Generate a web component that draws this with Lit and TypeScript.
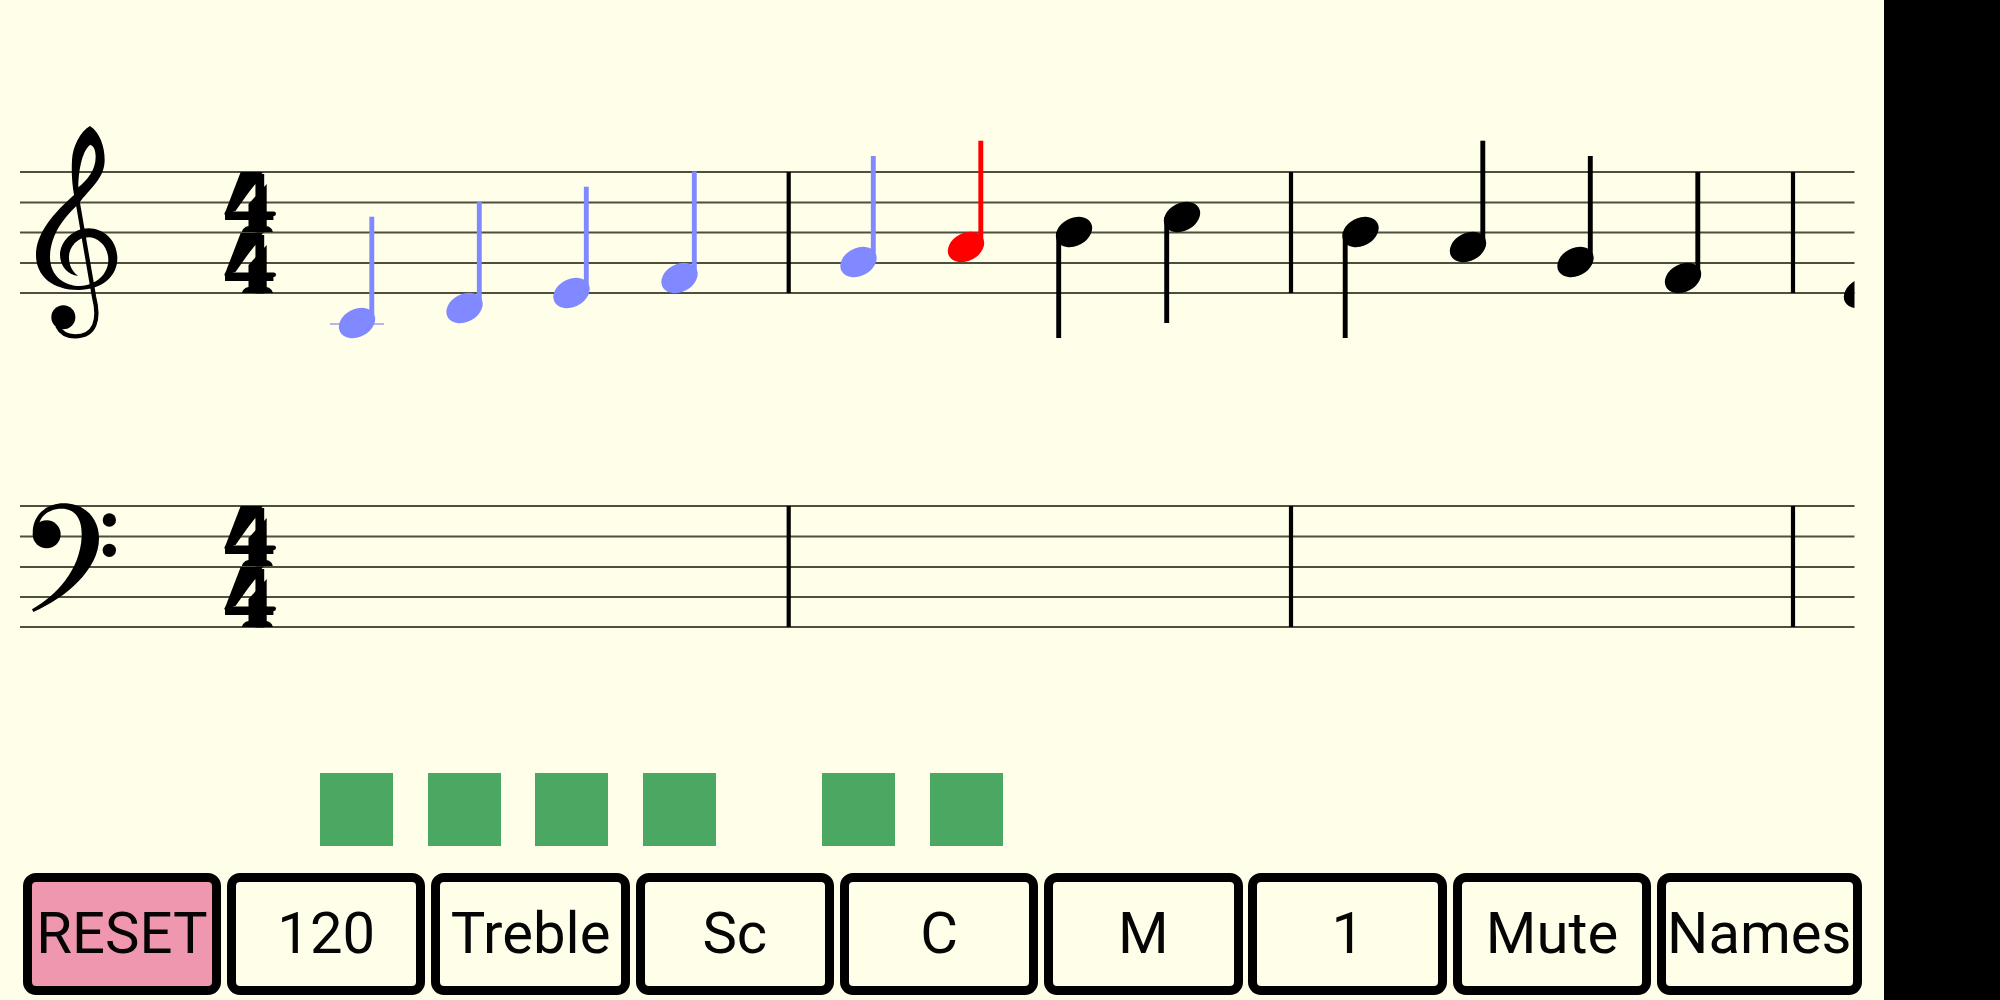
import { LitElement, html, css, svg } from "lit";
import { customElement } from "lit/decorators.js";

const STAFF_A = [172, 202.5, 232.5, 263, 293];
const STAFF_B = [506, 536.5, 567, 597, 627];
const BARS = [788.7, 1291, 1793];
const BLUE = "#8089ff";
const RED = "#ff0000";
const BLACK = "#000000";

type Note = { cx: number; cy: number; tip: number; color: string; down?: boolean };

const NOTES: Note[] = [
  { cx: 357, cy: 323, tip: 216.7, color: BLUE },
  { cx: 464.5, cy: 308, tip: 201.7, color: BLUE },
  { cx: 571.5, cy: 293, tip: 186.7, color: BLUE },
  { cx: 679.5, cy: 278, tip: 171.5, color: BLUE },
  { cx: 858.5, cy: 262, tip: 156, color: BLUE },
  { cx: 966, cy: 247, tip: 140.7, color: RED },
  { cx: 1074, cy: 232, tip: 338, color: BLACK, down: true },
  { cx: 1182, cy: 217, tip: 323, color: BLACK, down: true },
  { cx: 1360.5, cy: 232, tip: 338, color: BLACK, down: true },
  { cx: 1468, cy: 247, tip: 140.7, color: BLACK },
  { cx: 1575.5, cy: 262, tip: 156, color: BLACK },
  { cx: 1683, cy: 278, tip: 172, color: BLACK },
  { cx: 1862, cy: 293, tip: 187, color: BLACK },
];

const BUTTONS = ["RESET", "120", "Treble", "Sc", "C", "M", "1", "Mute", "Names"];

@customElement("app-root")
export class AppRoot extends LitElement {
  static styles = css`
    :host {
      display: flex;
      width: 2000px;
      height: 1000px;
      background: #000;
      font-family: Roboto, "Liberation Sans", sans-serif;
      overflow: hidden;
    }
    .main {
      flex: 0 0 1884px;
      height: 1000px;
      background: #fffee8;
      display: flex;
      flex-direction: column;
    }
    .score {
      display: block;
      flex: 0 0 773px;
      width: 1884px;
      height: 773px;
    }
    .staff-line {
      stroke: #4f4f3f;
      stroke-width: 2;
    }
    .bar-line {
      stroke: #000;
      stroke-width: 4.2;
    }
    .ledger {
      stroke: #9ba1f2;
      stroke-width: 1.5;
    }
    .digit {
      font-family: "Liberation Serif", serif;
      font-size: 89px;
      fill: #000;
    }
    .beats {
      display: flex;
      flex: 0 0 73px;
      padding-left: 320px;
      gap: 34.6px;
    }
    .beat {
      flex: 0 0 73px;
      height: 73px;
      background: #4aa863;
    }
    .beat.after-rest {
      margin-left: 71.8px;
    }
    .controls {
      display: flex;
      gap: 5.8px;
      padding: 27px 0 0 22.7px;
    }
    .btn {
      box-sizing: border-box;
      min-width: 198.5px;
      height: 121.5px;
      padding: 0 1px 2px;
      border: 9.8px solid #000;
      border-radius: 13px;
      background: #fffee8;
      color: #050505;
      font-family: inherit;
      font-size: 58px;
      line-height: 1;
      display: flex;
      align-items: center;
      justify-content: center;
      white-space: nowrap;
    }
    .btn.reset {
      background: #ef97ae;
    }
  `;

  private note(n: Note) {
    const stemX = n.down ? n.cx - 15.3 : n.cx + 14.8;
    return svg`
      <line x1=${stemX} x2=${stemX} y1=${n.cy} y2=${n.tip} stroke=${n.color} stroke-width="4.9"></line>
      <ellipse cx=${n.cx} cy=${n.cy} rx="19.2" ry="14" fill=${n.color}
        transform="rotate(-28 ${n.cx} ${n.cy})"></ellipse>
    `;
  }

  private staff(lines: number[]) {
    return svg`
      ${lines.map(
        (y) => svg`<line class="staff-line" x1="20" x2="1854.5" y1=${y} y2=${y}></line>`
      )}
      ${BARS.map(
        (x) =>
          svg`<line class="bar-line" x1=${x} x2=${x} y1=${lines[0]} y2=${lines[4]}></line>`
      )}
    `;
  }

  /* One time-signature digit, anchored on its baseline. The glyph is a real
     text 4; the heavy diagonal, stem and foot of the engraved form sit on it. */
  private digit(base: number) {
    return svg`
      <g transform="translate(223 ${base}) scale(1.17 1)">
        <text class="digit" x="0" y="0">4</text>
      </g>
      <g transform="translate(0 ${base})" fill="#000">
        <polygon points="240.7,-60 263,-60 235.5,-21 224.5,-18"></polygon>
        <polygon points="248.5,-28 266.7,-48 266.7,-3 248.5,-3"></polygon>
        <rect x="224.5" y="-20.5" width="51.5" height="4.6" rx="2.3"></rect>
        <path d="M242,0 C242,-3 246,-6 249,-6 L266,-6 C269,-6 272.7,-3 272.7,0 Z"></path>
      </g>
    `;
  }

  render() {
    return html`
      <div class="main">
        <svg class="score" viewBox="0 0 1884 773" xmlns="http://www.w3.org/2000/svg">
          <defs>
            <clipPath id="staff-clip"><rect x="0" y="0" width="1854.5" height="773"></rect></clipPath>
          </defs>
          ${this.staff(STAFF_A)} ${this.staff(STAFF_B)}

          <g transform="translate(0 100) scale(0.33333)">
            <path
              fill="#000"
              fill-rule="evenodd"
              d="M270,78 C300,98 314,140 314,180 C314,235 270,265 235,312 C195,350 152,400 150,470
                 C150,530 195,558 240,558 C290,556 325,520 325,480 C325,440 295,412 265,412
                 C230,412 205,445 207,475 C208,505 225,522 235,528 C205,525 180,500 180,465
                 C180,425 220,385 265,385 C315,385 352,425 352,475 C352,530 305,570 235,570
                 C160,570 108,530 108,465 C108,400 160,340 222,285 C216,250 214,215 216,180
                 C218,140 240,95 270,78 Z
                 M270,135 C250,150 236,200 235,262 C262,238 287,212 287,170 C287,150 280,135 270,135 Z"
            ></path>
            <path
              fill="none"
              stroke="#000"
              stroke-width="13"
              d="M232,300 L282,590 C300,660 285,709 225,709 C200,709 183,700 172,678"
            ></path>
            <circle cx="190" cy="652" r="36" fill="#000"></circle>
          </g>

          <g transform="translate(0 480) scale(0.33333)">
            <path
              fill="#000"
              d="M98,155 C100,100 145,70 190,70 C255,70 297,115 297,175 C297,270 195,355 100,396
                 L96,388 C170,345 240,270 245,170 C247,115 225,86 185,86 C150,86 125,105 118,128 Z"
            ></path>
            <circle cx="140" cy="163" r="42" fill="#000"></circle>
            <circle cx="328" cy="120" r="20" fill="#000"></circle>
            <circle cx="328" cy="211" r="20" fill="#000"></circle>
          </g>

          ${this.digit(232)} ${this.digit(293)} ${this.digit(566)} ${this.digit(627)}

          <line class="ledger" x1="330" x2="384" y1="324" y2="324"></line>
          <g clip-path="url(#staff-clip)">${NOTES.map((n) => this.note(n))}</g>
        </svg>
        <div class="beats">
          ${[0, 1, 2, 3, 4, 5].map(
            (i) => html`<div class="beat ${i === 4 ? "after-rest" : ""}"></div>`
          )}
        </div>
        <div class="controls">
          ${BUTTONS.map(
            (b, i) => html`<div class="btn ${i === 0 ? "reset" : ""}">${b}</div>`
          )}
        </div>
      </div>
    `;
  }
}
